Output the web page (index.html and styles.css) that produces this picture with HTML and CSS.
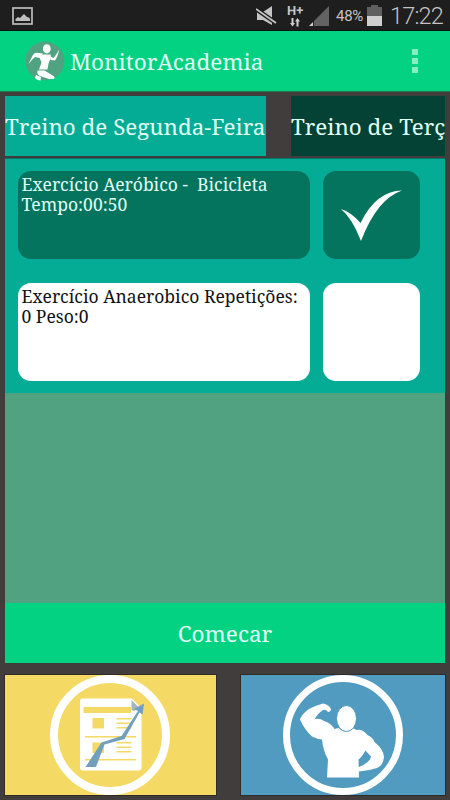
FILE: index.html
```html
<!DOCTYPE html>
<html lang="pt-br">
  <head>
    <meta charset="UTF-8" />
    <meta name="viewport" content="width=device-width, initial-scale=1.0" />
    <title>MonitorAcademia</title>
    <link rel="stylesheet" href="styles.css">
  </head>
  <body>
    <div class="status-bar">
      <svg class="icon-picture" width="21" height="18" viewBox="0 0 21 18">
        <rect x="1" y="1" width="19" height="16" fill="none" stroke="#bdbdbd" stroke-width="1.7" />
        <path d="M3.5 14V12L6 10l2 1 4-4 3 3 2 .5 1 1.5v2z" fill="#bdbdbd" />
      </svg>
      <div class="status-right">
        <svg class="icon-mute" width="21" height="20" viewBox="0 0 21 20">
          <path d="M1 6h6l9-6v19l-9-5H1z" fill="#c4c4c4" />
          <path d="M0 3l20 14" stroke="#1e1e1e" stroke-width="4.5" />
          <path d="M0 3l20 14" stroke="#c4c4c4" stroke-width="1.8" />
        </svg>
        <div class="network">
          <span>H+</span>
          <svg width="12" height="9" viewBox="0 0 12 9">
            <path d="M2.5 0h2v5H6L3.500 8.500 1 5h1.500zM7.500 8.500h2v-5H11L8.500 0 6 3.500h1.500z" fill="#d0d0d0" />
          </svg>
        </div>
        <svg class="icon-signal" width="20" height="21" viewBox="0 0 20 21">
          <path d="M20 0v20H5V15z" fill="#636363" />
          <path d="M4 16v4H0z" fill="#d0d0d0" />
        </svg>
        <span class="percent">48%</span>
        <svg class="icon-battery" width="15" height="21" viewBox="0 0 15 21">
          <path d="M4 0h7v2h4v9H0V2h4z" fill="#606060" />
          <path d="M0 11h15v10H0z" fill="#cfcfcf" />
        </svg>
        <span class="clock">17:22</span>
      </div>
    </div>

    <header class="action-bar">
      <svg class="logo" width="40" height="40" viewBox="0 0 40 40">
        <circle cx="20" cy="20" r="19.500" fill="#4fa381" />
        <g fill="#fff">
          <ellipse cx="21.800" cy="7.800" rx="3.900" ry="4.600" />
          <path d="M18 12.500l-6-.8q-3 0-4.500 3L3.500 23q3-4 6.500-7l5 1z" />
          <path d="M17.500 13.500h8l.5 3-2.500 6-1 6h-8.500l2.500-7-2-5z" />
          <path d="M25.500 15.500l3 1.500q3-3 5.500-8.500-1 7-4 11l-4.500-.5z" />
          <path d="M12.500 29.500h7l9 5.500q2 1.500.5 3H24l-9-3q-3.500-2-2.500-5.500z" />
          <path d="M11 34l5 2-.5 3.500q-4 0-5.500-3z" />
        </g>
      </svg>
      <h1>MonitorAcademia</h1>
      <div class="menu-dots">
        <span></span>
        <span></span>
        <span></span>
      </div>
    </header>

    <main class="container">
      <div class="tabs">
        <div class="tab active">Treino de Segunda-Feira</div>
        <div class="tab next">Treino de Terç</div>
      </div>

      <div class="exercises">
        <div class="exercise done">
          <div class="description">Exercício Aeróbico -&nbsp; Bicicleta<br />Tempo:00:50</div>
          <div class="check">
            <svg width="62" height="52" viewBox="0 0 62 52">
              <path d="M0 19q10 3 19.500 14Q35 1 61 .5 36 9 20 51 11 28 0 19z" fill="#fff" />
            </svg>
          </div>
        </div>
        <div class="exercise">
          <div class="description">Exercício Anaerobico Repetições:<br />0 Peso:0</div>
          <div class="check"></div>
        </div>
      </div>

      <div class="empty"></div>
      <div class="start">Comecar</div>

      <div class="shortcuts">
        <div class="shortcut report">
          <svg width="120" height="120" viewBox="0 0 120 120">
            <circle cx="60" cy="60" r="56" fill="none" stroke="#fff" stroke-width="8" />
            <path d="M33 23.500h49l9.500 10v59q0 3-3 3H33q-3 0-3-3v-66q0-3 3-3z" fill="#fff" />
            <path d="M33.500 32H81v6H33.500zM42.500 43h11.500v10.500H42.500zM42.500 67.500h11.500V78H42.500zM35 61h51v1.500H35zM35 84h51v1.500H35zM66.500 43h15v1.500h-15zM66.500 47.500h15v1.500h-15zM66.500 52h15v1.500h-15zM66.500 67h15v1.500h-15zM66.500 71.500h15v1.500h-15zM66.500 76h15v1.500h-15z" fill="#f4da64" />
            <path d="M81.500 25l7 7-4 4-3-1z" fill="#a8b5bd" />
            <path d="M94 28.500l-1.500 11-3-2L74.500 64l-20 5.500L46 92H35.500l16-24.500L71.500 61l16.500-25-4-2z" fill="#719fbd" />
          </svg>
        </div>
        <div class="shortcut body">
          <svg width="120" height="120" viewBox="0 0 120 120">
            <circle cx="60" cy="60" r="56.500" fill="none" stroke="#fff" stroke-width="7" />
            <path d="M17 44q3-6 9-10 8-4 14-5.500 6 1 8 5.500 0 2.500-3 3-2-3-5-2-6 4-8 9 5-1 9 2 7 2 10.500 8l4-1q7 7 14 0l4 2q6-1 11 5 5 2 7 7 9 7 9.500 15-1 9-7 11-9 3-18 3.500l-1-4q8-3 12-8l1-3-5.500-6q-4 7-7 9l.5 18H44l1-18q-5-9-6-20-5-.5-10-3-7-6-12-17z" fill="#fff" />
            <ellipse cx="63.500" cy="43.500" rx="10" ry="13" fill="#fff" stroke="#509bbf" stroke-width="1" />
          </svg>
        </div>
      </div>
    </main>
  </body>
</html>
```
FILE: styles.css
```css
* {
  box-sizing: border-box;
}
body {
  margin: 0;
  height: 800px;
  overflow: hidden;
  display: flex;
  flex-direction: column;
  background-color: #413d3d;
  font-family: "Noto Serif", "DejaVu Serif Condensed", "DejaVu Serif", serif;
  color: #e0fff4;
}
svg {
  display: block;
  flex-shrink: 0;
}
.status-bar {
  height: 31px;
  flex-shrink: 0;
  display: flex;
  justify-content: space-between;
  padding: 0 7px 0 12px;
  background-color: #1e1e1e;
  border-bottom: 1px solid #0b1510;
  font-family: Roboto, sans-serif;
  color: #c4c4c4;
}
.icon-picture {
  margin-top: 7px;
}
.status-right {
  display: flex;
  align-items: flex-start;
}
.icon-mute {
  margin: 6px 10px 0 0;
}
.network {
  width: 18px;
  margin: 4px 4px 0 0;
  font-size: 13px;
  line-height: 13px;
  font-weight: bold;
}
.network span {
  display: block;
}
.network svg {
  margin: 1px 0 0 2px;
}
.icon-signal {
  margin: 6px 7px 0 0;
}
.percent {
  width: 31px;
  font-size: 15px;
  line-height: 33px;
  letter-spacing: -0.3px;
}
.icon-battery {
  margin-top: 5px;
}
.clock {
  width: 53px;
  margin-left: 8px;
  font-size: 23.5px;
  line-height: 33px;
  font-weight: 300;
  letter-spacing: -0.8px;
}
.action-bar {
  height: 61px;
  flex-shrink: 0;
  display: flex;
  align-items: center;
  padding: 0 32px 0 25px;
  background-color: #04d283;
  border-bottom: 1px solid #247450;
}
.action-bar h1 {
  flex: 1;
  margin: 0 0 0 5px;
  font-size: 22.5px;
  font-weight: normal;
}
.menu-dots {
  display: flex;
  flex-direction: column;
  gap: 3px;
}
.menu-dots span {
  width: 6px;
  height: 6px;
  background-color: #86efc2;
}
.container {
  flex: 1;
  display: flex;
  flex-direction: column;
  padding: 4px 5px 5px;
}
.tabs {
  height: 60px;
  display: flex;
  gap: 25px;
}
.tab {
  width: 261px;
  flex-shrink: 0;
  background-color: #044236;
  font-size: 22.4px;
  line-height: 61px;
  white-space: nowrap;
}
.tab.active {
  background-color: #04ab95;
}
.tab.next {
  width: 154px;
}
.exercises {
  height: 235px;
  margin-top: 2px;
  padding: 12px 25px 12px 12.5px;
  display: flex;
  flex-direction: column;
  justify-content: space-between;
  background-color: #04ab95;
  border-top: 1px solid #087367;
}
.exercise {
  height: 98px;
  display: flex;
  gap: 12.5px;
}
.exercise.done {
  height: 88px;
}
.description,
.check {
  background-color: #fff;
  color: #111;
  border-radius: 13px;
}
.description {
  flex: 1;
  padding: 3px 4px;
  font-size: 17.5px;
  line-height: 20px;
  white-space: nowrap;
}
.check {
  width: 97.5px;
  padding: 19px 0 0 18px;
}
.done .description,
.done .check {
  background-color: #04745f;
  color: #e0fff4;
}
.empty {
  flex: 1;
  background-color: #50a280;
}
.start {
  height: 60px;
  background-color: #04d283;
  font-size: 22.5px;
  line-height: 61px;
  text-align: center;
}
.shortcuts {
  height: 120px;
  margin-top: 12px;
  display: flex;
  gap: 25px;
}
.shortcut {
  display: flex;
  justify-content: center;
  outline: 1px solid #302b27;
}
.report {
  width: 210.5px;
  background-color: #f4da64;
}
.body {
  flex: 1;
  background-color: #509bbf;
}
```
